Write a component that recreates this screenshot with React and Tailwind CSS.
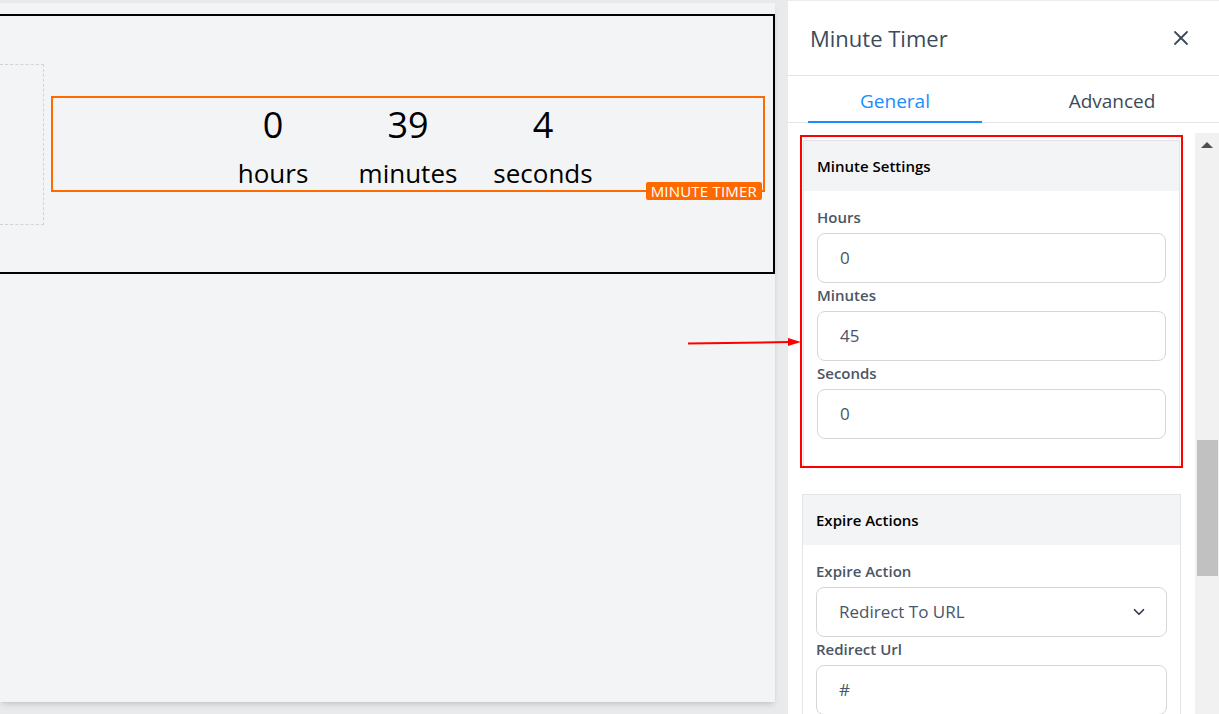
import { X, ChevronDown } from "lucide-react";

const Field = ({ label, value, first, select }) => (
	<div className={first ? "" : "mt-[2px]"}>
		<p className="h-[20px] leading-[20px] text-[15px] font-semibold text-[#4b5563]">{label}</p>
		<div className="mt-[6px] h-[50px] rounded-lg border border-[#d4d6dc] bg-white flex items-center justify-between pl-[22px] pr-[18px] text-[17px] text-[#4a5568]">
			<span>{value}</span>
			{select && <ChevronDown size={18} strokeWidth={2.2} className="text-[#2d3748]" />}
		</div>
	</div>
);

const Card = ({ title, children, className = "" }) => (
	<div className={"border border-[#e2e4e8] bg-white " + className}>
		<div className="h-[50px] bg-[#f3f4f6] flex items-center px-[13px] text-[15px] font-semibold text-black">
			{title}
		</div>
		<div className="px-[13px] pt-[16px] pb-[27px]">{children}</div>
	</div>
);

const Unit = ({ num, label }) => (
	<div className="w-[135px] flex flex-col items-center text-black">
		<span className="text-[36px] leading-[40px]">{num}</span>
		<span className="mt-[12px] text-[26px] leading-[32px]">{label}</span>
	</div>
);

export default function App() {
	return (
		<div className="relative w-[1219px] h-[714px] flex overflow-hidden bg-[#e9eaec] font-['Open_Sans',sans-serif]">
			{/* canvas */}
			<div className="w-[788px] shrink-0 pt-[3px]">
				<div className="w-[775px] h-[699px] bg-[#f3f4f6] shadow-md pt-[11px]">
					<div className="h-[260px] border-2 border-l-0 border-black flex items-center">
						<div className="w-[44px] h-[161px] border border-l-0 border-dashed border-[#cfd3dc]" />
						<div className="relative ml-[7px] w-[714px] h-[96px] border-2 border-[#ff6a00] flex justify-center pt-[7px]">
							<Unit num="0" label="hours" />
							<Unit num="39" label="minutes" />
							<Unit num="4" label="seconds" />
							<span className="absolute right-[1px] bottom-[-10px] bg-[#ff6a00] text-white text-[15px] leading-[18px] px-[5px] rounded-[2px] uppercase tracking-[0.2px]">
								Minute Timer
							</span>
						</div>
					</div>
				</div>
			</div>

			{/* settings panel */}
			<div className="w-[431px] shrink-0 bg-white flex flex-col border-t border-[#ececec]">
				<div className="h-[75px] shrink-0 flex items-center justify-between pl-[22px] pr-[26px] border-b border-[#e2e4e8]">
					<h2 className="text-[22px] text-[#3d4a5a]">Minute Timer</h2>
					<X size={24} strokeWidth={1.8} className="text-[#3d4a5a]" />
				</div>
				<div className="h-[47px] shrink-0 flex px-[20px] border-b border-[#e2e4e8] text-[19px]">
					<div className="w-[174px] pt-[5px] flex items-center justify-center text-[#1a8cff] border-b-2 border-[#1a8cff] -mb-px">
						General
					</div>
					<div className="w-[174px] ml-[43px] pt-[5px] flex items-center justify-center text-[#3d4a5a]">
						Advanced
					</div>
				</div>
				<div className="flex-1 flex min-h-0">
					<div className="flex-1 px-[12px] pt-[12px] overflow-hidden">
						<div className="border-2 border-[#ff0000] px-[1px] pt-[3px]">
							<Card title="Minute Settings" className="border-b-0">
								<Field first label="Hours" value="0" />
								<Field label="Minutes" value="45" />
								<Field label="Seconds" value="0" />
							</Card>
						</div>
						<Card title="Expire Actions" className="mt-[26px] mx-[2px]">
							<Field first label="Expire Action" value="Redirect To URL" select />
							<Field label="Redirect Url" value="#" />
						</Card>
					</div>
					<div className="w-[24px] shrink-0 mt-[10px] bg-[#f1f1f1] flex flex-col items-center">
						<div className="mt-[9px] w-0 h-0 border-x-[6px] border-x-transparent border-b-[6px] border-b-[#505050]" />
						<div className="mt-[292px] w-[21px] h-[136px] bg-[#c1c1c1]" />
					</div>
				</div>
			</div>

			{/* annotation arrow */}
			<svg className="absolute left-[686px] top-[334px]" width="118" height="16" viewBox="0 0 118 16">
				<line x1="2" y1="9.5" x2="104" y2="8" stroke="#ff0000" strokeWidth="2" />
				<polygon points="102,4 115,8 102,12" fill="#ff0000" />
			</svg>
		</div>
	);
}
